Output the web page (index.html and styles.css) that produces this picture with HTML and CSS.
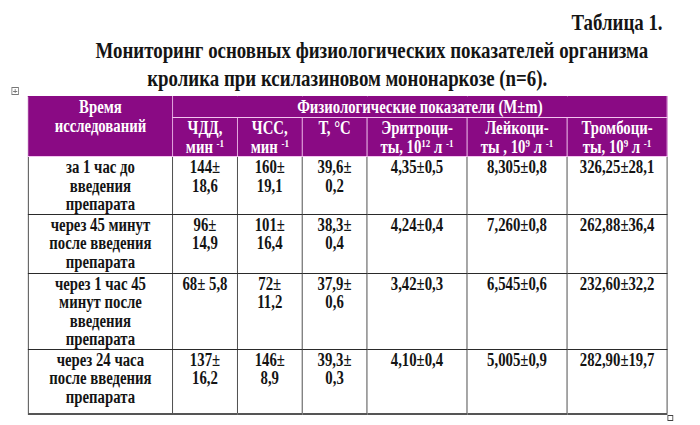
FILE: index.html
```html
<!DOCTYPE html>
<html lang="ru">
<head>
<meta charset="utf-8">
<link rel="stylesheet" href="styles.css">
</head>
<body>
<div class="frame">
<div class="page">
  <div class="caption">
    <div class="label">Таблица 1.</div>
    <div class="title">
      <div class="line1">Мониторинг основных физиологических показателей организма</div>
      <div class="line2">кролика при ксилазиновом мононаркозе (n=6).</div>
    </div>
  </div>
  <div class="tablewrap">
    <span class="move-handle"></span>
    <table class="data">
      <colgroup>
        <col class="c-time">
        <col class="c-narrow">
        <col class="c-narrow">
        <col class="c-narrow">
        <col class="c-wide">
        <col class="c-wide">
        <col class="c-wide">
      </colgroup>
      <thead>
        <tr class="h1">
          <th rowspan="2" class="time-head">Время<br>исследований</th>
          <th colspan="6">Физиологические показатели (M±m)</th>
        </tr>
        <tr class="h2">
          <th>ЧДД,<br>мин <sup>-1</sup></th>
          <th>ЧСС,<br>мин <sup>-1</sup></th>
          <th>Т, °С</th>
          <th>Эритроци-<br>ты, 10<sup>12</sup> л <sup>-1</sup></th>
          <th>Лейкоци-<br>ты , 10<sup>9</sup> л <sup>-1</sup></th>
          <th>Тромбоци-<br>ты, 10<sup>9</sup> л <sup>-1</sup></th>
        </tr>
      </thead>
      <tbody>
        <tr class="r1">
          <td>за 1 час до<br>введения<br>препарата</td>
          <td>144±<br>18,6</td>
          <td>160±<br>19,1</td>
          <td>39,6±<br>0,2</td>
          <td>4,35±0,5</td>
          <td>8,305±0,8</td>
          <td>326,25±28,1</td>
        </tr>
        <tr class="r2">
          <td>через 45 минут<br>после введения<br>препарата</td>
          <td>96±<br>14,9</td>
          <td>101±<br>16,4</td>
          <td>38,3±<br>0,4</td>
          <td>4,24±0,4</td>
          <td>7,260±0,8</td>
          <td>262,88±36,4</td>
        </tr>
        <tr class="r3">
          <td>через 1 час 45<br>минут после<br>введения<br>препарата</td>
          <td>68± 5,8</td>
          <td>72±<br>11,2</td>
          <td>37,9±<br>0,6</td>
          <td>3,42±0,3</td>
          <td>6,545±0,6</td>
          <td>232,60±32,2</td>
        </tr>
        <tr class="r4">
          <td>через 24 часа<br>после введения<br>препарата</td>
          <td>137±<br>16,2</td>
          <td>146±<br>8,9</td>
          <td>39,3±<br>0,3</td>
          <td>4,10±0,4</td>
          <td>5,005±0,9</td>
          <td>282,90±19,7</td>
        </tr>
      </tbody>
    </table>
    <span class="size-handle"></span>
  </div>
</div>
</div>
</body>
</html>
```

FILE: styles.css
```css
html, body {
  margin: 0;
  padding: 0;
  background: #ffffff;
}

.frame {
  width: 700px;
  height: 425px;
  overflow: hidden;
}

.page {
  width: 850px;
  transform: scaleX(0.82);
  transform-origin: 0 0;
  font-family: "Liberation Serif", "Times New Roman", serif;
  font-weight: bold;
  color: #141414;
}

.caption {
  width: 779px;
  margin-left: 34px;
  padding-top: 9px;
}

.label {
  text-align: right;
  font-size: 23px;
  line-height: 28px;
  padding-right: 5px;
}

.title {
  text-align: center;
  font-size: 23px;
  line-height: 28px;
}

.line1 {
  padding-left: 60px;
}

.tablewrap {
  position: relative;
  margin-left: 34px;
  margin-top: 3px;
  width: 780px;
}

.move-handle {
  position: absolute;
  left: -20px;
  top: -9px;
  width: 7px;
  height: 6px;
  border: 1px solid #777;
  background:
    linear-gradient(#777, #777) center / 5px 1px no-repeat,
    linear-gradient(#777, #777) center / 1px 4px no-repeat,
    #fff;
}

.size-handle {
  position: absolute;
  right: -7px;
  bottom: -6px;
  width: 5px;
  height: 4px;
  border: 1px solid #444;
  background: #fff;
}

.data {
  border-collapse: collapse;
  table-layout: fixed;
  width: 780px;
  font-size: 18px;
  line-height: 18.5px;
}

.c-time { width: 176px; }
.c-narrow { width: 79px; }
.c-wide { width: 122px; }

.data th {
  background: #8a0a84;
  color: #ffffff;
  border: 1px solid #f3c4ef;
  padding: 1px 0 0 0;
  text-align: center;
  vertical-align: top;
  font-weight: bold;
}

.data thead tr.h1 th {
  border-top-color: #8a0a84;
}

.data thead th:first-child {
  border-left-color: #8a0a84;
}

.h1 { height: 21px; }
.h2 { height: 39px; }

.data sup {
  font-size: 11px;
  line-height: 0;
  vertical-align: 6px;
}

.data td {
  border: 1px solid #2a2a2a;
  padding: 1px 0 0 0;
  text-align: center;
  vertical-align: top;
}

.data tbody tr:last-child td {
  border-bottom: 2px solid #555;
}

.r1 { height: 57px; }
.r2 { height: 59px; }
.r3 { height: 76px; }
.r4 { height: 65px; }
```
